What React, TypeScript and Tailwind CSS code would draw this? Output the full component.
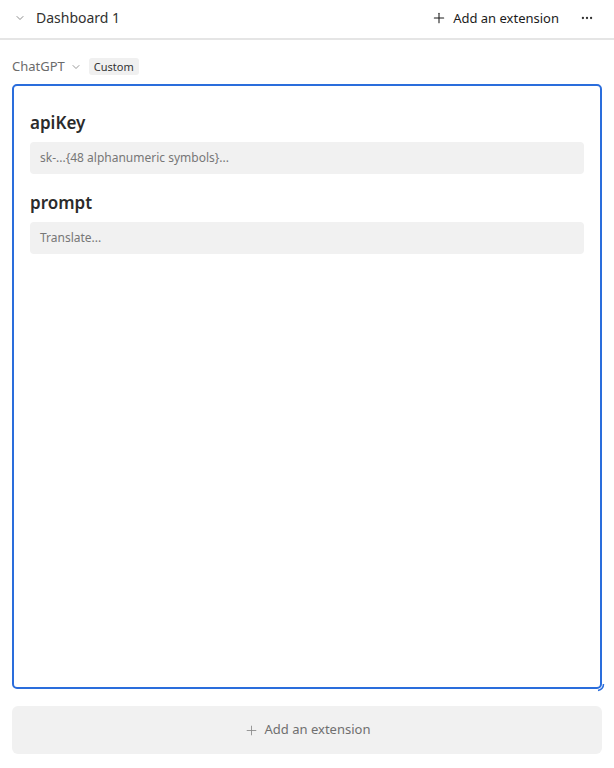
import { ChevronDown, Plus, MoreHorizontal } from "lucide-react";

const fields = [
  { name: "apiKey", placeholder: "sk-...{48 alphanumeric symbols}..." },
  { name: "prompt", placeholder: "Translate..." },
];

export default function App() {
  return (
    <div className="flex h-[768px] w-[614px] flex-col bg-white font-['Noto_Sans',sans-serif] text-[#323130]">
      {/* Header */}
      <div className="flex h-[40px] items-center border-b-2 border-[#e5e5e5] pb-[2px] pl-[14px] pr-[20px]">
        <ChevronDown className="h-[12px] w-[12px] text-[#666]" strokeWidth={1.5} />
        <span className="ml-[10px] text-[14px] leading-none">Dashboard 1</span>
        <button className="ml-auto flex items-center gap-[6px] text-[13px] leading-none text-[#1b1b1b]">
          <Plus className="h-[16px] w-[16px]" strokeWidth={1.6} />
          Add an extension
        </button>
        <MoreHorizontal className="ml-[21px] h-[14px] w-[14px] text-[#333]" strokeWidth={2} />
      </div>

      {/* Extension */}
      <div className="flex flex-col px-[12px] pt-[18px]">
        <div className="flex items-center">
          <span className="text-[13px] leading-none text-[#6b6b6b]">ChatGPT</span>
          <ChevronDown className="ml-[5px] h-[12px] w-[12px] text-[#777]" strokeWidth={1.5} />
          <span className="ml-[7px] rounded-[3px] bg-[#f0f0f0] px-[5px] py-[3px] text-[11px] leading-none text-[#333]">
            Custom
          </span>
        </div>

        <div className="relative mt-[9px] flex h-[605px] flex-col rounded-[5px] border-2 border-[#2a6ddc] px-[16px] pt-[28px]">
          {fields.map((f) => (
            <div key={f.name} className="mb-[20px] flex flex-col">
              <span className="text-[17px] font-semibold leading-none text-[#2b2b2b]">{f.name}</span>
              <div className="mt-[11px] flex h-[32px] items-center rounded-[4px] bg-[#f1f1f1] px-[10px] text-[12px] text-[#777]">
                {f.placeholder}
              </div>
            </div>
          ))}
          <svg className="absolute -bottom-[5px] -right-[5px]" width="10" height="10" viewBox="0 0 10 10">
            <path d="M8.5 2 Q8.5 7 3 8.5" fill="none" stroke="#2a6ddc" strokeWidth="1.5" />
          </svg>
        </div>

        <button className="mt-[17px] flex h-[48px] items-center justify-center gap-[6px] rounded-[6px] bg-[#f1f1f1] text-[13px] text-[#6f6f6f]">
          <Plus className="h-[15px] w-[15px] text-[#8a8a8a]" strokeWidth={1.4} />
          Add an extension
        </button>
      </div>
    </div>
  );
}
